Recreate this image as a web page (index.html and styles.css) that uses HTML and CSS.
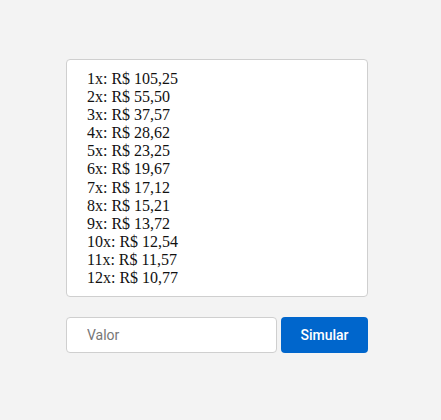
FILE: index.html
```html
<!DOCTYPE html>
<html lang="pt-BR">
<head>
<meta charset="utf-8">
<link rel="stylesheet" href="styles.css">
</head>
<body>
<main class="wrap">
  <ul class="result">
    <li>1x: R$ 105,25</li>
    <li>2x: R$ 55,50</li>
    <li>3x: R$ 37,57</li>
    <li>4x: R$ 28,62</li>
    <li>5x: R$ 23,25</li>
    <li>6x: R$ 19,67</li>
    <li>7x: R$ 17,12</li>
    <li>8x: R$ 15,21</li>
    <li>9x: R$ 13,72</li>
    <li>10x: R$ 12,54</li>
    <li>11x: R$ 11,57</li>
    <li>12x: R$ 10,77</li>
  </ul>
  <form class="form">
    <input class="input" type="text" placeholder="Valor">
    <button class="btn" type="button">Simular</button>
  </form>
</main>
</body>
</html>
```
FILE: styles.css
```css
html, body {
  margin: 0;
  padding: 0;
  background: #f3f3f3;
  height: 100%;
}
.wrap {
  width: 302px;
  padding: 59px 0 0 66px;
}
.result {
  list-style: none;
  margin: 0;
  padding: 10px 20px 10px 20px;
  background: #fff;
  border: 1px solid #cfcfcf;
  border-radius: 4px;
  font-family: "Liberation Serif", serif;
  font-size: 16px;
  line-height: 18.1px;
  color: #111;
  height: 216px;
}
.form {
  display: flex;
  gap: 4px;
  margin-top: 20px;
}
.input {
  box-sizing: border-box;
  width: 211px;
  height: 36px;
  padding: 0 20px;
  border: 1px solid #cfcfcf;
  border-radius: 4px;
  background: #fff;
  font-family: Roboto, sans-serif;
  font-size: 14px;
  outline: none;
}
.input::placeholder {
  color: #777;
}
.btn {
  box-sizing: border-box;
  width: 87px;
  height: 36px;
  border: none;
  border-radius: 4px;
  background: #0066cc;
  color: #fff;
  font-family: Roboto, sans-serif;
  font-size: 14px;
  font-weight: 500;
  cursor: pointer;
}
```
